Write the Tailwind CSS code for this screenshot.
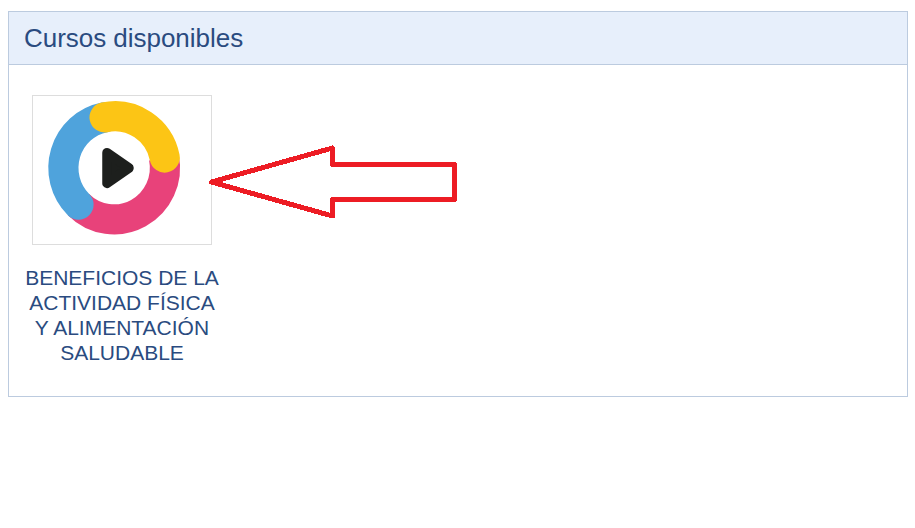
<!DOCTYPE html>
<html lang="es">
<head>
<meta charset="utf-8">
<title>Cursos disponibles</title>
<script src="https://cdn.jsdelivr.net/npm/@tailwindcss/browser@4"></script>
</head>
<body class="bg-white px-2 pt-[11px] font-['Liberation_Sans',Arial,sans-serif] text-[#2a4b80]">
<section class="h-[386px] w-[900px] border border-[#bccbdf]">
  <h2 class="h-[53px] border-b border-[#bccbdf] bg-[#e7effb] pl-[15px] text-[26px] leading-[52px] tracking-[-0.03px] whitespace-nowrap">Cursos disponibles</h2>
  <a class="ml-[13px] mt-[30px] flex w-[200px] flex-col items-center">
    <div class="relative h-[150px] w-[180px] border border-[#dddddd]">
      <svg class="block h-[148px] w-[178px]" viewBox="33 96 178 148" fill="none" stroke-width="30.2" stroke-linecap="round">
        <path d="M163.9 157.5A50.8 51.5 0 0 1 78.5 204.6" stroke="#e8427a" stroke-linecap="butt"/>
        <path d="M104.5 117.4A50.8 51.5 0 0 0 78.5 204.6" stroke="#4fa3dc"/>
        <path d="M104.6 117.4A50.8 51.5 0 0 1 164.7 157.5" stroke="#fcc515"/>
        <path d="M107 152.7L129 168L107 183.4Z" fill="#1d1f1d" stroke="#1d1f1d" stroke-width="9.5" stroke-linejoin="round"/>
      </svg>
      <svg class="absolute left-[173px] top-[46px] h-[80px] w-[255px]" viewBox="206 142 255 80" fill="none" stroke="#ed1c24" stroke-width="5" stroke-linejoin="round" shape-rendering="crispEdges">
        <path d="M211.5 182L332.5 148V164.5H454.5V199.5H332.5V216Z"/>
      </svg>
    </div>
    <span class="mt-5 text-center text-[21px] leading-[25px] whitespace-nowrap">BENEFICIOS DE LA<br>ACTIVIDAD FÍSICA<br>Y ALIMENTACIÓN<br>SALUDABLE</span>
  </a>
</section>
</body>
</html>
